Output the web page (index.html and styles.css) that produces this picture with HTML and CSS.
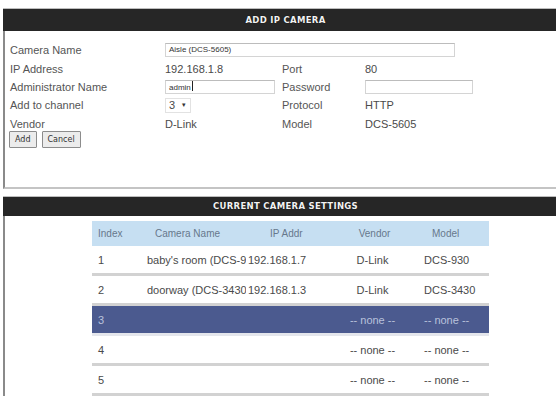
FILE: index.html
```html
<!DOCTYPE html>
<html>
<head>
<meta charset="utf-8">
<title>Add IP Camera</title>
<link rel="stylesheet" href="styles.css">
</head>
<body>
<div class="page">
  <section class="box box-add">
    <h2 class="box-title">ADD IP CAMERA</h2>
    <div class="form">
      <div class="label">Camera Name</div>
      <div class="value span3"><span class="field field-wide">Aisle (DCS-5605)</span></div>

      <div class="label">IP Address</div>
      <div class="value">192.168.1.8</div>
      <div class="label">Port</div>
      <div class="value">80</div>

      <div class="label">Administrator Name</div>
      <div class="value"><span class="field field-mid">admin<span class="caret"></span></span></div>
      <div class="label">Password</div>
      <div class="value"><span class="field field-pass"></span></div>

      <div class="label">Add to channel</div>
      <div class="value"><span class="select">3<span class="arrow">&#9662;</span></span></div>
      <div class="label">Protocol</div>
      <div class="value">HTTP</div>

      <div class="label">Vendor</div>
      <div class="value">D-Link</div>
      <div class="label">Model</div>
      <div class="value">DCS-5605</div>
    </div>
    <div class="buttons">
      <button class="btn">Add</button>
      <button class="btn">Cancel</button>
    </div>
  </section>

  <section class="box box-list">
    <h2 class="box-title">CURRENT CAMERA SETTINGS</h2>
    <div class="table">
      <div class="row head">
        <div class="c-idx">Index</div>
        <div class="c-name">Camera Name</div>
        <div class="c-ip">IP Addr</div>
        <div class="c-vendor">Vendor</div>
        <div class="c-model">Model</div>
      </div>
      <div class="row">
        <div class="c-idx">1</div>
        <div class="c-name">baby's room (DCS-930)</div>
        <div class="c-ip">192.168.1.7</div>
        <div class="c-vendor">D-Link</div>
        <div class="c-model">DCS-930</div>
      </div>
      <div class="row">
        <div class="c-idx">2</div>
        <div class="c-name">doorway (DCS-3430)</div>
        <div class="c-ip">192.168.1.3</div>
        <div class="c-vendor">D-Link</div>
        <div class="c-model">DCS-3430</div>
      </div>
      <div class="row selected">
        <div class="c-idx">3</div>
        <div class="c-name"></div>
        <div class="c-ip"></div>
        <div class="c-vendor">-- none --</div>
        <div class="c-model">-- none --</div>
      </div>
      <div class="row">
        <div class="c-idx">4</div>
        <div class="c-name"></div>
        <div class="c-ip"></div>
        <div class="c-vendor">-- none --</div>
        <div class="c-model">-- none --</div>
      </div>
      <div class="row">
        <div class="c-idx">5</div>
        <div class="c-name"></div>
        <div class="c-ip"></div>
        <div class="c-vendor">-- none --</div>
        <div class="c-model">-- none --</div>
      </div>
    </div>
  </section>
</div>
</body>
</html>
```

FILE: styles.css
```css
* { box-sizing: border-box; }

html, body {
  margin: 0;
  background: #fff;
}

body {
  font-family: "Liberation Sans", Arial, sans-serif;
  font-size: 11px;
  color: #4a4a4a;
}

.page {
  width: 553px;
  margin-left: 3px;
  padding-top: 8px;
}

.box {
  border-left: 2px solid #8a8a8a;
}

.box-add {
  border-bottom: 2px solid #c4c4c4;
  height: 181px;
}

.box-list {
  margin-top: 7px;
}

.box-title {
  margin: 0 0 0 -2px;
  background: #262626;
  border-top: 1px solid #bdbdbd;
  color: #f2f2f2;
  font-family: "DejaVu Sans", Verdana, sans-serif;
  font-weight: bold;
  font-size: 8.5px;
  letter-spacing: 0.3px;
  text-align: center;
  text-shadow: 0 0 1px #000;
  padding-left: 12px;
}

.box-add .box-title { height: 23px; line-height: 22px; }
.box-list .box-title { height: 20px; line-height: 19px; }

/* form grid: label / value / label / value */
.form {
  display: grid;
  grid-template-columns: 155px 117px 83px 1fr;
  grid-auto-rows: 18.4px;
  align-items: center;
  padding: 10px 0 0 5px;
}

.label { color: #555; }
.value { color: #4a4a4a; }
.span3 { grid-column: 2 / span 3; }

.field {
  display: block;
  height: 14px;
  border: 1px solid #d4d4d4;
  border-top-color: #bcbcbc;
  background: #fff;
  font-size: 8px;
  line-height: 12px;
  padding-left: 3px;
  color: #333;
}

.field-wide { width: 290px; }
.field-mid { width: 110px; }
.field-pass { width: 108px; }

.caret {
  display: inline-block;
  width: 1px;
  height: 10px;
  background: #222;
  vertical-align: -1px;
  margin-left: 1px;
}

.select {
  display: inline-flex;
  align-items: center;
  gap: 7px;
  height: 15px;
  padding: 0 4px 0 3px;
  border: 1px solid #e2e2e2;
  font-size: 11px;
}

.arrow {
  font-size: 7px;
  color: #333;
}

.buttons {
  display: flex;
  gap: 5px;
  margin-top: -2px;
  padding-left: 4px;
}

.btn {
  font-family: "DejaVu Sans", Verdana, sans-serif;
  font-size: 8px;
  color: #333;
  height: 17px;
  padding: 0 5px;
  background: #ececec;
  border: 1px solid #8c8c8c;
  border-radius: 1px;
}

/* camera list */
.table {
  width: 397px;
  margin: 5px 0 0 87px;
}

.row {
  display: grid;
  grid-template-columns: 52px 102px 94px 65px 84px;
  height: 30px;
  align-items: center;
  border-bottom: 3px solid #d2d2d2;
  background: #fff;
}

.row > div {
  white-space: nowrap;
  overflow: hidden;
}

.row.head {
  height: 25px;
  border-bottom: 0;
  background: #c6dff2;
  color: #66788c;
  font-size: 10px;
}

.row.selected {
  background: #4b5a8f;
  color: #b9c2dc;
  border-bottom-color: #e4e6ec;
}

.c-idx { padding-left: 6px; }
.c-name { padding: 0 6px 0 3px; }
.c-ip { padding-left: 2px; }
.c-vendor { text-align: center; }
.c-model { padding-left: 19px; }

.head .c-name { padding-left: 11px; }
.head .c-ip { padding-left: 24px; }
.head .c-vendor { padding-left: 4px; }
.head .c-model { padding-left: 27px; }
```
